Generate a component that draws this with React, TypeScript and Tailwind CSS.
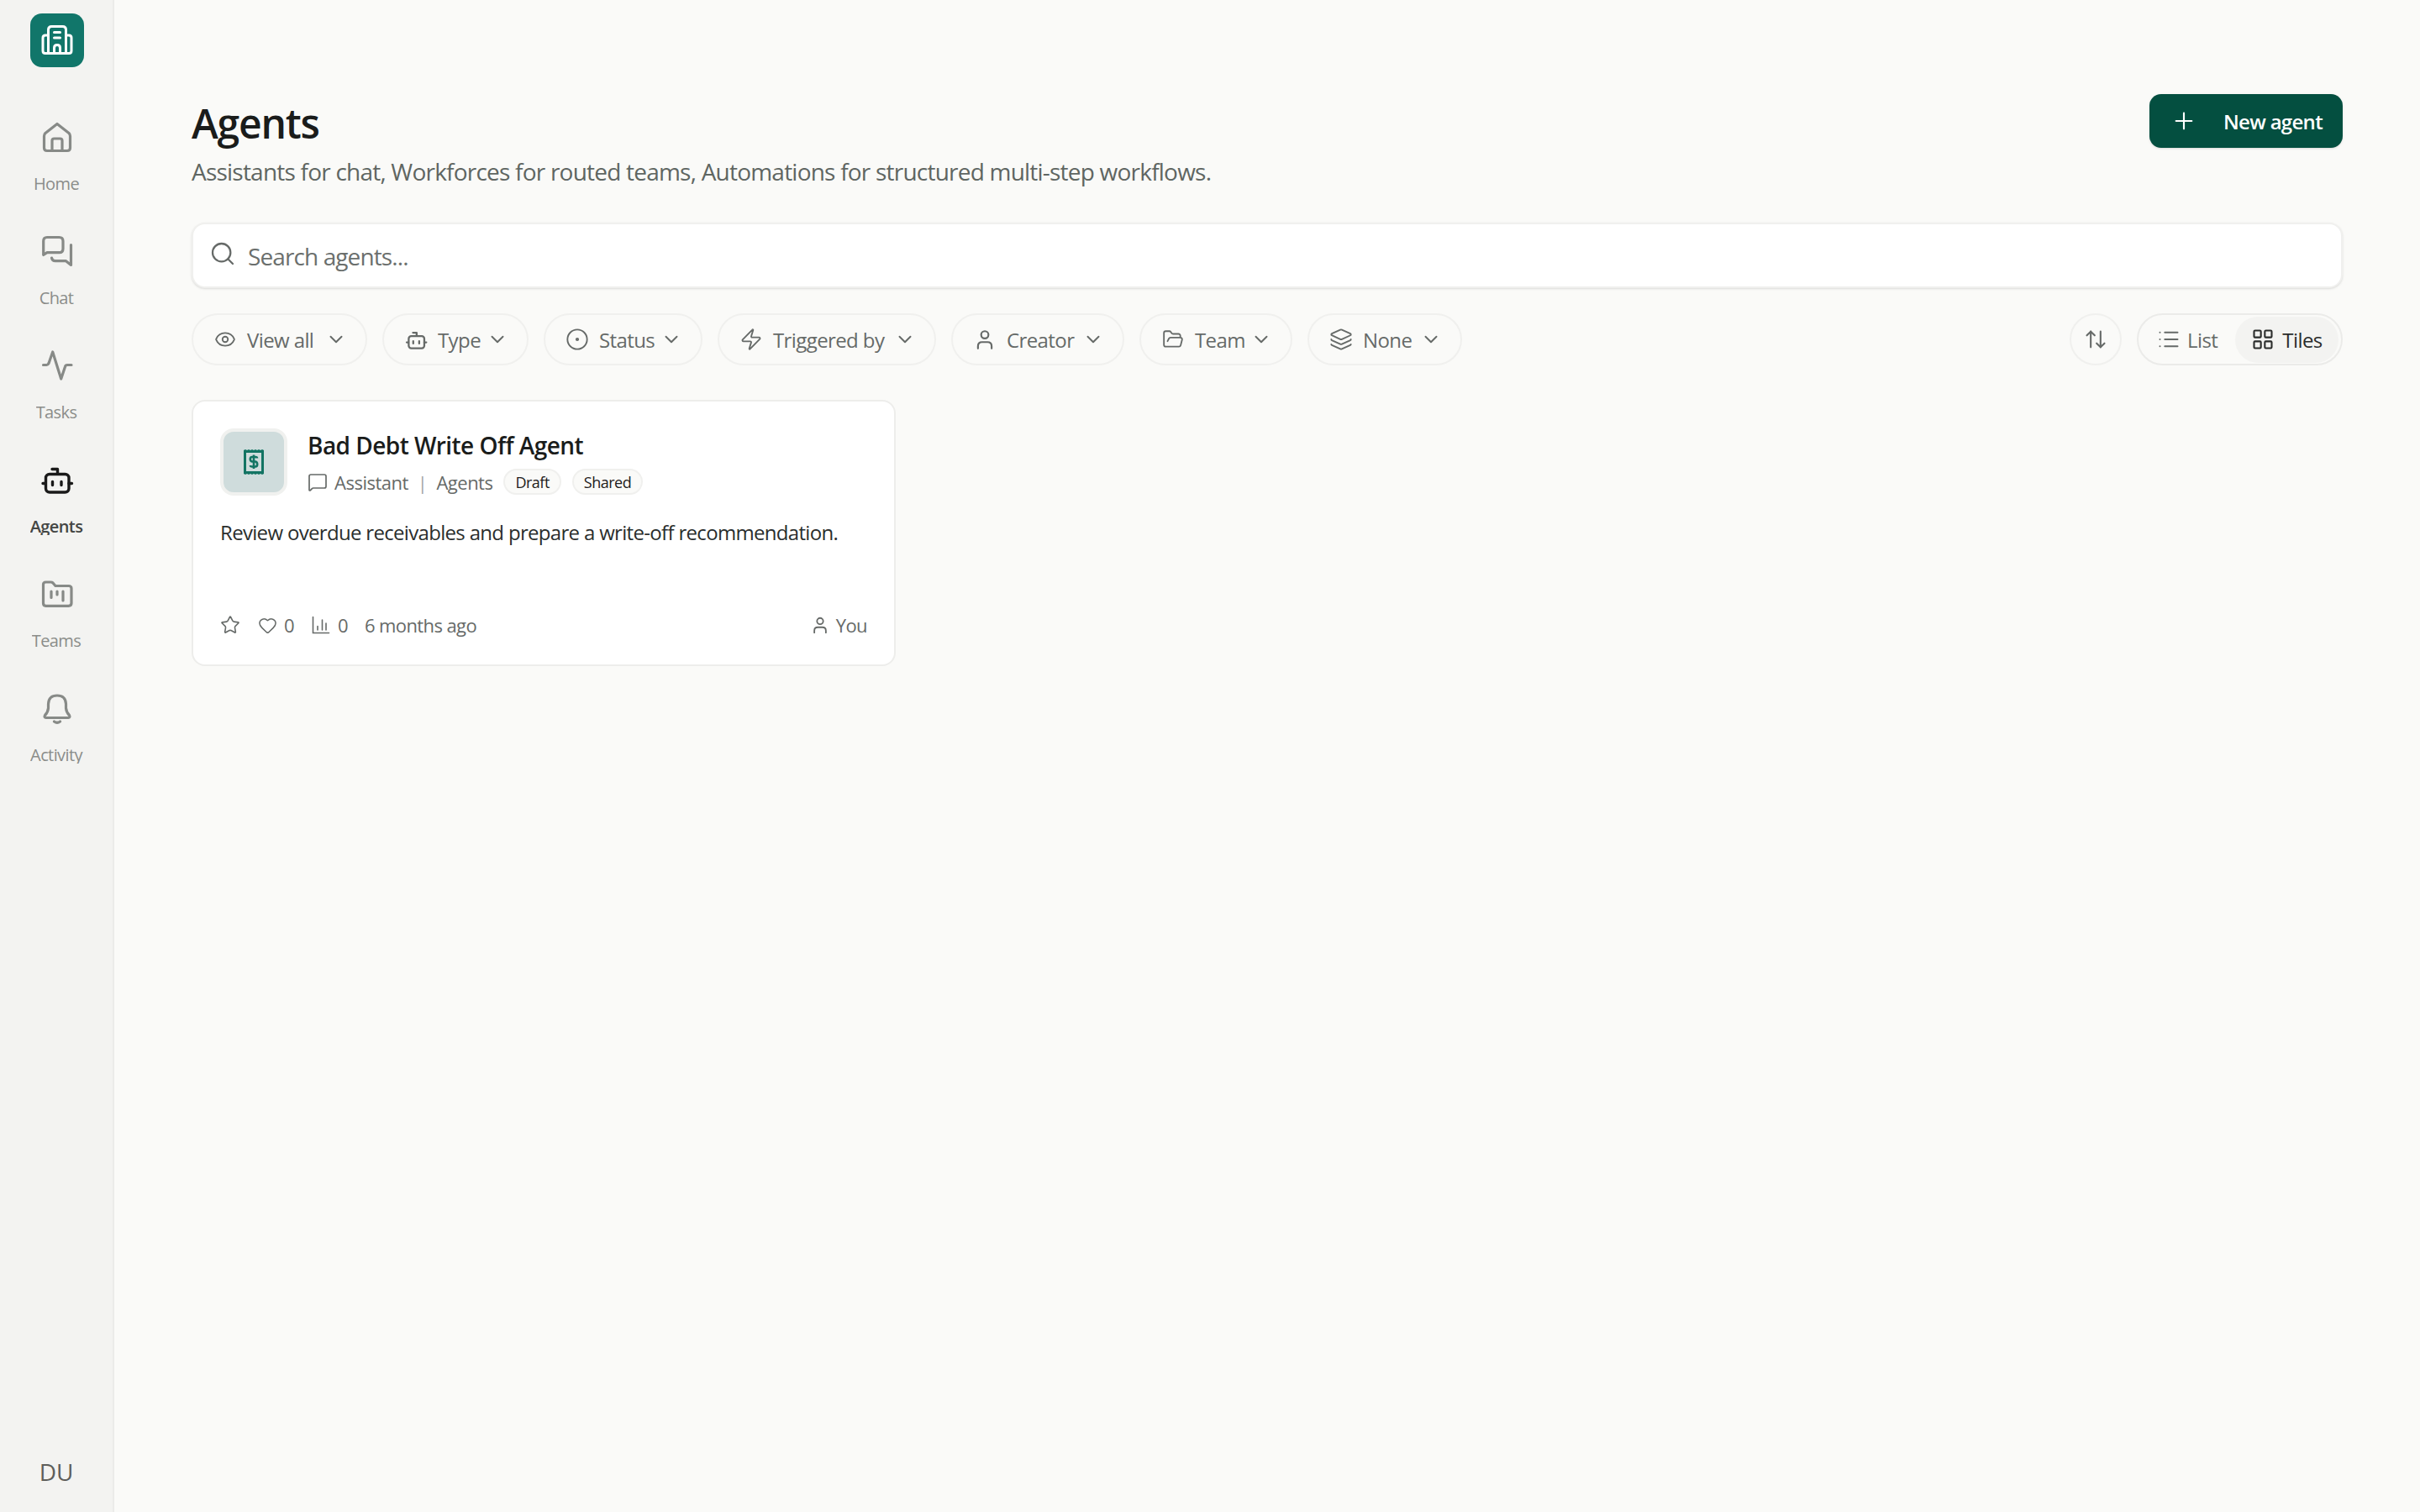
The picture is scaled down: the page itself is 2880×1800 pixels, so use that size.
import React from "react";
import {
  ArrowUpDown,
  ChevronDown,
  CircleDot,
  Eye,
  FolderOpen,
  Heart,
  Layers,
  LayoutGrid,
  List,
  MessageSquare,
  Plus,
  Search,
  Star,
  Zap,
} from "lucide-react";

type IconProps = { className?: string };

const LogoIcon = () => (
  <svg width="40" height="38" viewBox="0 0 40 38" fill="none" stroke="#fff" strokeWidth="3" strokeLinecap="round" strokeLinejoin="round">
    <path d="M9.5 34.5V6.5Q9.5 2.5 13.5 2.5H26.5Q30.5 2.5 30.5 6.5V34.5Z" />
    <path d="M9.5 13H6Q3 13 3 16V31.5Q3 34.5 6 34.5H34Q37 34.5 37 31.5V16Q37 13 34 13H30.5" />
    <path d="M16.5 9.5H23.5M16.5 16H23.5" />
    <path d="M16.5 34V28Q16.5 24.5 20 24.5Q23.5 24.5 23.5 28V34" />
  </svg>
);

const HomeIcon = () => (
  <svg width="40" height="40" viewBox="0 0 40 40" fill="none" stroke="currentColor" strokeWidth="3.2" strokeLinecap="round" strokeLinejoin="round">
    <path d="M20 4.5L34 15.5Q35.5 17 35.5 19V33Q35.5 36.5 32 36.5H8Q4.5 36.5 4.5 33V19Q4.5 17 6 15.5Z" />
    <path d="M14 36V24.5Q14 22 16.5 22H23.5Q26 22 26 24.5V36" />
  </svg>
);

const ChatIcon = () => (
  <svg width="40" height="40" viewBox="0 0 40 40" fill="none" stroke="currentColor" strokeWidth="3.2" strokeLinecap="round" strokeLinejoin="round">
    <path d="M3.7 24.5V8Q3.7 3.5 8 3.5H22.5Q27 3.5 27 8V17Q27 21.7 22.5 21.7H8Z" />
    <path d="M36.5 12.5V36.5L30.5 31.7H18Q14 31.7 13.5 28" />
  </svg>
);

const TasksIcon = () => (
  <svg width="40" height="40" viewBox="0 0 40 40" fill="none" stroke="currentColor" strokeWidth="3.2" strokeLinecap="round" strokeLinejoin="round">
    <path d="M3.5 19.5H7.5Q9 19.5 10 17.5L14.7 4L24.7 36L29.5 21.5Q30 19.5 32 19.5H37" />
  </svg>
);

const AgentsIcon = ({ size = 40 }: { size?: number }) => (
  <svg width={size} height={size} viewBox="0 0 40 40" fill="none" stroke="currentColor" strokeWidth="3.4" strokeLinecap="round" strokeLinejoin="round">
    <rect x="6.5" y="13.5" width="27.5" height="21.5" rx="4.5" />
    <path d="M14 7.5H20.5V13M3 24.5H6M34 24.5H37.5M14.5 22.5V26.5M25 22.5V26.5" />
  </svg>
);

const TeamsIcon = () => (
  <svg width="40" height="40" viewBox="0 0 40 40" fill="none" stroke="currentColor" strokeWidth="3.2" strokeLinecap="round" strokeLinejoin="round">
    <path d="M3.5 9Q3.5 6 6.5 6H12.5Q14 6 15 7L18 10.5H33.5Q37 10.5 37 13.5V31Q37 34.3 33.5 34.3H6.5Q3.5 34.3 3.5 31Z" />
    <path d="M13 17V24.5M20 17V21M27 17V28" />
  </svg>
);

const BellIcon = () => (
  <svg width="40" height="40" viewBox="0 0 40 40" fill="none" stroke="currentColor" strokeWidth="3.2" strokeLinecap="round" strokeLinejoin="round">
    <path d="M20 5Q10 5 9.5 15V20Q9 25 5.5 28.5Q4 31 7 31.5H33Q36 31 34.5 28.5Q31 25 30.5 20V15Q30 5 20 5Z" />
    <path d="M16.5 36Q20 38.5 23.5 36" />
  </svg>
);

const PersonIcon = ({ className }: IconProps) => (
  <svg className={className} viewBox="0 0 24 24" fill="none" stroke="currentColor" strokeWidth="2" strokeLinecap="round" strokeLinejoin="round">
    <circle cx="12" cy="7" r="4" />
    <path d="M4.5 22V19.5Q4.5 15 9 15H15Q19.5 15 19.5 19.5V22" />
  </svg>
);

const StatsIcon = () => (
  <svg width="22" height="22" viewBox="0 0 22 22" fill="none" stroke="currentColor" strokeWidth="1.6" strokeLinecap="round">
    <path d="M1.5 1.5V20.5H20.5M7 17V12.5M12.5 17V5M17 17V9" />
  </svg>
);

const ReceiptIcon = () => (
  <svg width="24" height="30" viewBox="0 0 24 30">
    <path
      d="M0 1L2 0L4 1L6 0L8 1L10 0L12 1L14 0L16 1L18 0L20 1L22 0L24 1V29L22 30L20 29L18 30L16 29L14 30L12 29L10 30L8 29L6 30L4 29L2 30L0 29Z"
      fill="#137463"
    />
    <rect x="3" y="4" width="18" height="22" fill="#cfdcdc" />
    <path
      d="M16 10.5Q16 9 14 9H10Q7.8 9 7.8 11.5Q7.8 14 10 14.5H14Q16.2 15 16.2 17.8Q16.2 20.5 14 20.5H10Q8 20.5 8 19M12 6.5V23"
      fill="none"
      stroke="#137463"
      strokeWidth="2.6"
    />
  </svg>
);

const navItems = [
  { label: "Home", icon: <HomeIcon /> },
  { label: "Chat", icon: <ChatIcon /> },
  { label: "Tasks", icon: <TasksIcon /> },
  { label: "Agents", icon: <AgentsIcon />, active: true },
  { label: "Teams", icon: <TeamsIcon /> },
  { label: "Activity", icon: <BellIcon /> },
];

const filters = [
  { label: "View all", width: "w-[209px]", icon: <Eye size={26} strokeWidth={1.7} /> },
  { label: "Type", width: "w-[174px]", icon: <AgentsIcon size={27} /> },
  { label: "Status", width: "w-[189px]", icon: <CircleDot size={28} strokeWidth={1.6} /> },
  { label: "Triggered by", width: "w-[260px]", icon: <Zap size={28} strokeWidth={1.6} /> },
  { label: "Creator", width: "w-[206px]", icon: <PersonIcon className="h-[26px] w-[26px]" /> },
  { label: "Team", width: "w-[182px]", icon: <FolderOpen size={26} strokeWidth={1.7} /> },
  { label: "None", width: "w-[184px]", icon: <Layers size={28} strokeWidth={1.6} /> },
];

export default function App() {
  return (
    <div className="flex min-h-[1800px] bg-[#fafaf8] font-['Open_Sans','Noto_Sans',sans-serif] text-[#1a1c1b]">
      <aside className="flex h-[1800px] w-[136px] shrink-0 flex-col items-center bg-[#f3f3f1] shadow-[inset_-2px_0_0_#ebebe9]">
        <div className="mt-4 flex h-16 w-16 items-center justify-center rounded-[14px] bg-[#11766a]">
          <LogoIcon />
        </div>
        <nav className="mt-12 flex w-full flex-col">
          {navItems.map((item) => (
            <div
              key={item.label}
              className={`flex h-[136px] flex-col items-center pt-[15px] ${
                item.active ? "text-[#1a1a1a]" : "text-[#878a87]"
              }`}>
              {item.icon}
              <span
                className={`mt-[26px] h-5 overflow-hidden pr-[2px] text-[20px] leading-5 tracking-[-0.6px] ${
                  item.active ? "font-semibold text-[#444644]" : "text-[#8b8d8a]"
                }`}>
                {item.label}
              </span>
            </div>
          ))}
        </nav>
        <div className="mt-auto mb-[30px] pr-[2px] text-[28px] leading-9 text-[#5e5e5a]">DU</div>
      </aside>

      <main className="min-w-0 flex-1 px-[92px] pt-[112px]">
        <div className="flex items-start justify-between">
          <div>
            <h1 className="text-[48px] font-semibold leading-[70px] tracking-[-1.2px] text-[#1a1c1b]">Agents</h1>
            <p className="text-[28px] leading-[44px] tracking-[-0.78px] text-[#5f6662]">
              Assistants for chat, Workforces for routed teams, Automations for structured multi-step workflows.
            </p>
          </div>
          <button
            type="button"
            className="flex h-16 w-[230px] items-center rounded-[14px] bg-[#044f40] pl-[25px] text-[24px] font-semibold tracking-[-0.7px] text-white shadow-sm">
            <Plus size={32} strokeWidth={1.6} />
            <span className="ml-[31px] pt-[2px]">New agent</span>
          </button>
        </div>

        <div className="mt-[39px] flex h-[78px] items-center gap-[14px] rounded-2xl border-2 border-[#f0f0ee] bg-white pl-[19px] shadow-sm">
          <Search size={32} strokeWidth={1.7} className="-mt-[4px] text-[#666a68]" />
          <span className="pt-[2px] text-[28px] tracking-[-0.9px] text-[#6b6f6d]">Search agents...</span>
        </div>

        <div className="mt-[30px] flex items-center">
          <div className="flex gap-[18px]">
            {filters.map((f) => (
              <button
                key={f.label}
                type="button"
                className={`flex h-[62px] items-center rounded-full border-2 border-[#f0f0ee] pl-[24px] pr-[22px] text-[24px] tracking-[-0.6px] text-[#666a68] ${f.width}`}>
                <span className="flex w-7 justify-center">{f.icon}</span>
                <span className="ml-[12px] pt-[2px]">{f.label}</span>
                <ChevronDown size={26} strokeWidth={1.8} className="ml-auto" />
              </button>
            ))}
          </div>
          <div className="ml-auto flex items-center gap-[18px]">
            <button
              type="button"
              className="flex h-[62px] w-[62px] items-center justify-center rounded-full border-2 border-[#f0f0ee] text-[#666a68]">
              <ArrowUpDown size={28} strokeWidth={1.8} />
            </button>
            <div className="flex h-[62px] w-[245px] items-center rounded-full border-2 border-[#ebebe9] pl-[22px] pr-[3px] text-[24px] tracking-[-0.6px]">
              <span className="flex items-center gap-[8px] text-[#666a68]">
                <List size={28} strokeWidth={1.7} />
                <span className="pt-[2px]">List</span>
              </span>
              <span className="ml-auto flex h-[55px] w-[123px] items-center justify-center gap-[9px] rounded-full bg-[#f3f3f1] text-[#2a2c2b]">
                <LayoutGrid size={28} strokeWidth={1.8} />
                <span className="pt-[2px]">Tiles</span>
              </span>
            </div>
          </div>
        </div>

        <div className="mt-[41px] grid grid-cols-3 gap-[23px]">
          <article className="flex h-[317px] flex-col rounded-2xl border-2 border-[#ededeb] bg-white px-8 pb-[29px] pt-[32px]">
            <div className="flex gap-[24px]">
              <div className="flex h-20 w-20 items-center justify-center rounded-[16px] border-4 border-[#f0f1ef] bg-[#cfdcdc]">
                <ReceiptIcon />
              </div>
              <div>
                <h3 className="text-[28px] font-semibold leading-10 tracking-[-0.55px] text-[#1a1c1b]">Bad Debt Write Off Agent</h3>
                <div className="mt-2 flex h-[31px] items-center text-[22px] tracking-[-0.5px] text-[#666a68]">
                  <MessageSquare size={24} strokeWidth={1.7} />
                  <span className="ml-[8px] pt-[1px]">Assistant</span>
                  <span className="mx-[11px] pt-[1px] text-[#a3a5a3]">|</span>
                  <span className="pt-[1px]">Agents</span>
                  <span className="ml-[13px] flex h-[31px] items-center rounded-full border-2 border-[#f0f0ee] bg-[#fafaf8] px-[12px] pt-[1px] text-[18px] font-medium tracking-[-0.5px] text-[#1f2120]">
                    Draft
                  </span>
                  <span className="ml-[13px] flex h-[31px] items-center rounded-full border-2 border-[#f0f0ee] bg-[#fafaf8] px-[12px] pt-[1px] text-[18px] font-medium tracking-[-0.5px] text-[#1f2120]">
                    Shared
                  </span>
                </div>
              </div>
            </div>
            <p className="mt-[26px] text-[24px] leading-9 tracking-[-0.68px] text-[#2a2e2d]">
              Review overdue receivables and prepare a write-off recommendation.
            </p>
            <div className="mt-auto flex h-9 items-center text-[22px] tracking-[-0.6px] text-[#666a68]">
              <Star size={24} strokeWidth={1.6} />
              <Heart size={23} strokeWidth={1.6} className="ml-[21px]" />
              <span className="ml-[8px]">0</span>
              <span className="ml-[21px]"><StatsIcon /></span>
              <span className="ml-[9px]">0</span>
              <span className="ml-[20px]">6 months ago</span>
              <span className="ml-auto flex items-center gap-[8px]">
                <PersonIcon className="h-[22px] w-[22px]" />
                You
              </span>
            </div>
          </article>
        </div>
      </main>
    </div>
  );
}
